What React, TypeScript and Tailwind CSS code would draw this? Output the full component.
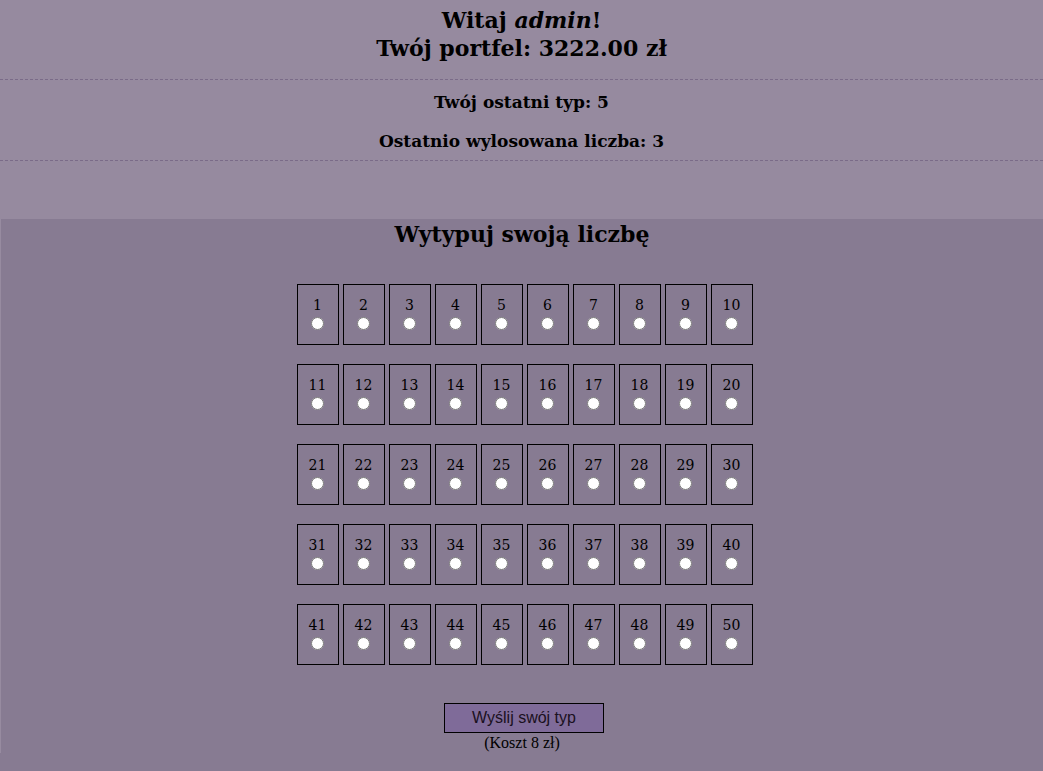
const numbers = Array.from({ length: 50 }, (_, i) => i + 1);

function NumberCell({ n }: { n: number }) {
  return (
    <label className="flex h-[61px] w-[42px] flex-col items-center border border-black pt-[11px]">
      <span className="text-[14px] leading-[18px]">{n}</span>
      <input
        type="radio"
        name="typ"
        value={n}
        className="m-0 mt-[3px] h-[13px] w-[13px]"
      />
    </label>
  );
}

export default function App() {
  return (
    <div className="min-h-[771px] bg-[#877b92] font-['DejaVu_Serif',serif] text-black">
      <header className="h-[219px] bg-[#968a9f] pt-[6px] text-center">
        <h1 className="text-[22px] font-bold leading-[28px]">
          Witaj <em>admin</em>!
          <br />
          Twój portfel: 3222.00 zł
        </h1>
        <div className="mt-[17px] border-y border-dashed border-[#7a6b88] pt-[11px] pb-[8px]">
          <p className="text-[17px] font-bold leading-[22px]">
            Twój ostatni typ: 5
          </p>
          <p className="mt-[17px] text-[17px] font-bold leading-[22px]">
            Ostatnio wylosowana liczba: 3
          </p>
        </div>
      </header>

      <main className="flex flex-col items-center border-l border-[#978ba0] pt-[1px]">
        <h2 className="text-[22px] font-bold leading-[28px]">
          Wytypuj swoją liczbę
        </h2>
        <form className="mt-[36px] flex flex-col items-center">
          <div className="ml-[5px] grid grid-cols-10 gap-x-[4px] gap-y-[19px]">
            {numbers.map((n) => (
              <NumberCell key={n} n={n} />
            ))}
          </div>
          <button
            type="button"
            className="mt-[38px] ml-[4px] h-[30px] w-[160px] border border-black bg-[#7f6b99] font-['Liberation_Sans',sans-serif] text-[16px] text-[#1a1020]"
          >
            Wyślij swój typ
          </button>
          <span className="mt-[0px] font-['Liberation_Serif',serif] text-[16px] leading-[20px]">
            (Koszt 8 zł)
          </span>
        </form>
      </main>
    </div>
  );
}
